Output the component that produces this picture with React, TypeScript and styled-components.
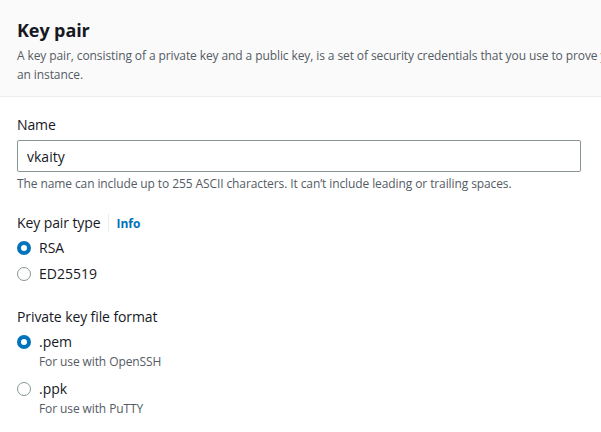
import React from "react";
import styled, { createGlobalStyle } from "styled-components";

const Global = createGlobalStyle`
  html, body { margin: 0; padding: 0; background: #ffffff; overflow: hidden; }
  body { font-family: "Open Sans", "Noto Sans", Arial, sans-serif; color: #16191f; }
  * { box-sizing: border-box; }
`;

const Page = styled.div`
  width: 601px;
  height: 432px;
  overflow: hidden;
  background: #ffffff;
`;

const Header = styled.header`
  background: #fafafa;
  border-bottom: 1px solid #eaeded;
  padding: 17px 17px 0 17px;
  height: 97px;
`;

const Title = styled.h2`
  margin: 0;
  font-size: 18px;
  line-height: 26px;
  font-weight: 700;
  letter-spacing: -0.1px;
  color: #16191f;
`;

const Description = styled.p`
  margin: 3px 0 0 0;
  width: 780px;
  font-size: 12px;
  line-height: 19px;
  letter-spacing: -0.1px;
  color: #545b64;
`;

const Body = styled.div`
  padding: 17px 20px 0 17px;
  display: flex;
  flex-direction: column;
`;

const Field = styled.section<{ $gap?: number }>`
  display: flex;
  flex-direction: column;
  margin-bottom: ${(p) => p.$gap ?? 0}px;
`;

const LabelRow = styled.div`
  display: flex;
  align-items: center;
  height: 22px;
  margin-bottom: 4px;
`;

const Label = styled.label`
  font-size: 14px;
  line-height: 22px;
  letter-spacing: -0.1px;
  color: #16191f;
`;

const Divider = styled.span`
  width: 1px;
  height: 18px;
  background: #eaeded;
  margin: 0 7px 0 8px;
`;

const InfoLink = styled.a`
  font-size: 12px;
  font-weight: 700;
  color: #0073bb;
  text-decoration: none;
`;

const Input = styled.input`
  width: 564px;
  height: 32px;
  border: 1px solid #879596;
  border-radius: 2px;
  padding: 0 9px;
  font-family: inherit;
  font-size: 14px;
  color: #16191f;
  background: #ffffff;
  outline: none;
`;

const Hint = styled.div`
  font-size: 12px;
  line-height: 18px;
  letter-spacing: -0.1px;
  color: #545b64;
  margin-top: 3px;
`;

const RadioGroup = styled.div<{ $gap: number }>`
  display: flex;
  flex-direction: column;
  gap: ${(p) => p.$gap}px;
`;

const RadioRow = styled.label`
  display: flex;
  align-items: flex-start;
  gap: 8px;
`;

const Circle = styled.span<{ $checked?: boolean }>`
  flex: none;
  width: 14px;
  height: 14px;
  border-radius: 50%;
  margin-top: 3px;
  background: #ffffff;
  border: ${(p) => (p.$checked ? "4px solid #0073bb" : "1.5px solid #879596")};
`;

const RadioText = styled.div`
  display: flex;
  flex-direction: column;
`;

const RadioLabel = styled.span`
  font-size: 14px;
  line-height: 20px;
  color: #16191f;
`;

const RadioDesc = styled.span`
  font-size: 12px;
  line-height: 17px;
  margin-top: 1px;
  letter-spacing: -0.1px;
  color: #545b64;
`;

const Radio = ({ checked, label, desc }: { checked?: boolean; label: string; desc?: string }) => (
  <RadioRow>
    <Circle $checked={checked} />
    <RadioText>
      <RadioLabel>{label}</RadioLabel>
      {desc && <RadioDesc>{desc}</RadioDesc>}
    </RadioText>
  </RadioRow>
);

export default function App() {
  return (
    <Page>
      <Global />
      <Header>
        <Title>Key pair</Title>
        <Description>
          A key pair, consisting of a private key and a public key, is a set of security credentials that you use to
          prove your identity when connecting to an instance.
        </Description>
      </Header>
      <Body>
        <Field $gap={19}>
          <LabelRow>
            <Label>Name</Label>
          </LabelRow>
          <Input defaultValue="vkaity" />
          <Hint>The name can include up to 255 ASCII characters. It can’t include leading or trailing spaces.</Hint>
        </Field>
        <Field $gap={22}>
          <LabelRow>
            <Label>Key pair type</Label>
            <Divider />
            <InfoLink>Info</InfoLink>
          </LabelRow>
          <RadioGroup $gap={6}>
            <Radio checked label="RSA" />
            <Radio label="ED25519" />
          </RadioGroup>
        </Field>
        <Field>
          <LabelRow>
            <Label>Private key file format</Label>
          </LabelRow>
          <RadioGroup $gap={9}>
            <Radio checked label=".pem" desc="For use with OpenSSH" />
            <Radio label=".ppk" desc="For use with PuTTY" />
          </RadioGroup>
        </Field>
      </Body>
    </Page>
  );
}
